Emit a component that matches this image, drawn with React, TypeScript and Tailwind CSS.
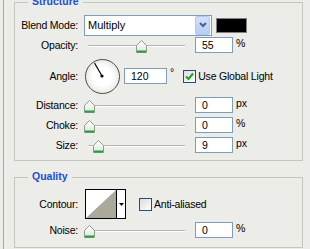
import { ReactNode } from 'react';

const font = "font-['Liberation_Sans','Arial',sans-serif]";

function Group({ title, className, children }: { title: string; className?: string; children: ReactNode }) {
    return (
        <div className={`relative w-[289px] border border-[#c6c6bc] ${className ?? ''}`}>
            <span className="absolute left-[13px] top-[-8px] bg-[#ecece8] px-[4px] text-[10.5px] font-bold leading-[12px] text-[#1a4fd0]">
                {title}
            </span>
            {children}
        </div>
    );
}

function Thumb() {
    return (
        <svg width="11" height="13" viewBox="0 0 11 13">
            <defs>
                <linearGradient id="tg" x1="0" y1="0" x2="0" y2="1">
                    <stop offset="0" stopColor="#ffffff" />
                    <stop offset="1" stopColor="#dfe6dc" />
                </linearGradient>
            </defs>
            <path d="M0.5 5.5 L5.5 0.5 L10.5 5.5 L10.5 12.5 L0.5 12.5 Z" fill="url(#tg)" stroke="#8a9c8c" />
            <path d="M1 11.5 H10" stroke="#21a33a" strokeWidth="2" />
        </svg>
    );
}

function Slider({ pos }: { pos: number }) {
    return (
        <div className="relative h-[18px] w-[106px]">
            <div className="absolute left-[4px] right-[5px] top-[9px] h-[2px] rounded-l-full border-t border-[#b4b4ac] bg-white" />
            <div className="absolute top-[4px]" style={{ left: pos }}>
                <Thumb />
            </div>
        </div>
    );
}

function NumBox({ value, w = 'w-[38px]' }: { value: string; w?: string }) {
    return (
        <div className={`flex h-[16px] ${w} items-center border border-[#7f9db9] bg-white pl-[6px] text-[10.5px] leading-none`}>
            {value}
        </div>
    );
}

function Label({ children }: { children: ReactNode }) {
    return <div className="w-[63px] shrink-0 text-right tracking-[-0.2px]">{children}</div>;
}

function SliderRow({ label, pos, value, unit, className }: { label: string; pos: number; value: string; unit: string; className?: string }) {
    return (
        <div className={`flex h-[18px] items-center ${className ?? ''}`}>
            <Label>{label}</Label>
            <div className="ml-[6px]"><Slider pos={pos} /></div>
            <div className="ml-[5px]"><NumBox value={value} /></div>
            <span className="ml-[3px] self-start pt-[1px]">{unit}</span>
        </div>
    );
}

function Checkbox({ checked }: { checked?: boolean }) {
    return (
        <div className="flex h-[13px] w-[13px] shrink-0 items-center justify-center border border-[#1c5180] bg-gradient-to-br from-[#dcdcd7] to-white">
            {checked && (
                <svg width="9" height="9" viewBox="0 0 9 9">
                    <path d="M1 4.5 L3.5 7 L8 1.5" fill="none" stroke="#21a121" strokeWidth="2" />
                </svg>
            )}
        </div>
    );
}

export default function App() {
    return (
        <div className={`h-[249px] w-[310px] overflow-hidden bg-[#ecece8] text-[10.5px] leading-[12px] text-black ${font}`}>
            <div className="ml-[3px] h-full border-l border-[#a8a8a0] pl-[10px] pt-[2px]">

                {/* Structure */}
                <Group title="Structure" className="h-[159px]">
                    <div className="pt-[11px]">
                        <div className="flex h-[22px] items-center">
                            <Label>Blend Mode:</Label>
                            <div className="ml-[6px] flex h-[21px] w-[128px] items-center border border-[#7f9db9] bg-white pl-[3px] text-[11px]">
                                <span className="flex-1">Multiply</span>
                                <div className="mr-[1px] flex h-[19px] w-[15px] items-center justify-center rounded-[2px] border border-[#b4c6f2] bg-gradient-to-b from-[#d4e0fd] to-[#b7cbf7]">
                                    <svg width="8" height="6" viewBox="0 0 8 6">
                                        <path d="M1 1 L4 4 L7 1" fill="none" stroke="#4d6185" strokeWidth="2" />
                                    </svg>
                                </div>
                            </div>
                            <div className="ml-[4px] h-[15px] w-[31px] border border-[#808080] bg-black" />
                        </div>

                        <SliderRow label="Opacity:" pos={52} value="55" unit="%" />

                        <div className="mt-[3px] flex h-[38px] items-center">
                            <Label>Angle:</Label>
                            <div className="relative ml-[7px] h-[35px] w-[35px] rounded-full border-[1.5px] border-[#4a4a4a] bg-[radial-gradient(circle,#ffffff_40%,#d8d8d4)]">
                                <svg className="absolute inset-0" width="32" height="32" viewBox="0 0 32 32">
                                    <path d="M16 16 L8.5 3" stroke="#000" strokeWidth="1.2" />
                                    <circle cx="16" cy="16" r="1.6" fill="#000" />
                                </svg>
                            </div>
                            <div className="ml-[4px]"><NumBox value="120" w="w-[43px]" /></div>
                            <span className="ml-[3px] self-start pt-[9px]">°</span>
                            <div className="ml-[9px]"><Checkbox checked /></div>
                            <span className="ml-[2px] tracking-[-0.2px]">Use Global Light</span>
                        </div>

                        <SliderRow label="Distance:" pos={0} value="0" unit="px" className="mt-[1px]" />
                        <SliderRow label="Choke:" pos={0} value="0" unit="%" className="mt-[2px]" />
                        <SliderRow label="Size:" pos={9} value="9" unit="px" className="mt-[2px]" />
                    </div>
                </Group>

                {/* Quality */}
                <Group title="Quality" className="mt-[16px] h-[71px]">
                    <div className="pt-[11px]">
                        <div className="flex h-[30px] items-center">
                            <Label>Contour:</Label>
                            <div className="ml-[7px] flex h-[30px] w-[41px] border border-black bg-white">
                                <svg width="30" height="28" viewBox="0 0 30 28" className="shrink-0">
                                    <path d="M0 28 L30 0 L30 28 Z" fill="#aba99c" />
                                </svg>
                                <div className="flex flex-1 items-center justify-center border-l border-black">
                                    <svg width="5" height="3" viewBox="0 0 5 3">
                                        <path d="M0 0 H5 L2.5 3 Z" fill="#000" />
                                    </svg>
                                </div>
                            </div>
                            <div className="ml-[13px]"><Checkbox /></div>
                            <span className="ml-[2px] tracking-[-0.2px]">Anti-aliased</span>
                        </div>
                        <SliderRow label="Noise:" pos={0} value="0" unit="%" className="mt-[2px]" />
                    </div>
                </Group>
            </div>
        </div>
    );
}
